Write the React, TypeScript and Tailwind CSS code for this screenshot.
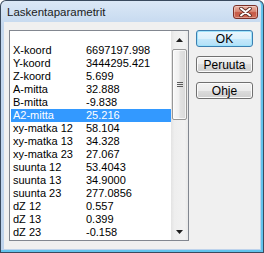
const rows: [string, string][] = [
    ['', ''],
    ['X-koord', '6697197.998'],
    ['Y-koord', '3444295.421'],
    ['Z-koord', '5.699'],
    ['A-mitta', '32.888'],
    ['B-mitta', '-9.838'],
    ['A2-mitta', '25.216'],
    ['xy-matka 12', '58.104'],
    ['xy-matka 13', '34.328'],
    ['xy-matka 23', '27.067'],
    ['suunta 12', '53.4043'],
    ['suunta 13', '34.9000'],
    ['suunta 23', '277.0856'],
    ['dZ 12', '0.557'],
    ['dZ 13', '0.399'],
    ['dZ 23', '-0.158'],
]

const selected = 6

const CloseButton = () => {
    return (
        <div className="w-[25px] h-[14px] rounded-[3px] border border-[#7b2f27] bg-[linear-gradient(to_bottom,#eab3a5_0%,#d98a78_45%,#c75a47_55%,#cf6a55_100%)] shadow-[inset_0_0_0_1px_rgba(255,255,255,0.35)] flex items-center justify-center">
            <svg width="13" height="10" viewBox="0 0 13 10">
                <path d="M2 1.5 L11 8.5 M11 1.5 L2 8.5" stroke="#5a2a24" strokeWidth="3.6" strokeLinecap="round" />
                <path d="M2 1.5 L11 8.5 M11 1.5 L2 8.5" stroke="#ffffff" strokeWidth="2" strokeLinecap="round" />
            </svg>
        </div>
    )
}

const Scrollbar = () => {
    return (
        <div className="w-[17px] h-full flex flex-col bg-[linear-gradient(to_right,#e3e3e3_0%,#eeeeee_20%,#f2f2f2_80%,#e9e9e9_100%)]">
            <div className="h-[17px] flex items-center justify-center">
                <svg width="7" height="4" viewBox="0 0 7 4"><path d="M0 4 L3.5 0 L7 4 Z" fill="#1f1f1f" /></svg>
            </div>
            <div className="mx-px mt-px h-[71px] rounded-[2px] border border-[#979797] bg-[linear-gradient(to_right,#f8f8f8_0%,#f0f0f0_45%,#e2e2e2_55%,#d9d9d9_100%)] shadow-[inset_0_0_0_1px_rgba(255,255,255,0.7)] flex flex-col items-center justify-center gap-px">
                <div className="w-[6px] h-px bg-[#5c5c5c]" />
                <div className="w-[6px] h-px bg-[#5c5c5c]" />
                <div className="w-[6px] h-px bg-[#5c5c5c]" />
            </div>
            <div className="flex-1" />
            <div className="h-[17px] flex items-center justify-center">
                <svg width="7" height="4" viewBox="0 0 7 4"><path d="M0 0 L7 0 L3.5 4 Z" fill="#1f1f1f" /></svg>
            </div>
        </div>
    )
}

const DialogButton = ({label, primary}: {label: string, primary?: boolean}) => {
    return (
        <button className={primary
            ? "w-[57px] h-[17px] rounded-[3px] border border-[#3c7fb1] bg-[linear-gradient(to_bottom,#eaf6fd_0%,#dcf1fc_50%,#c6e9fb_50%,#b3e0f8_100%)] shadow-[inset_0_0_0_1px_#9fe3fb] text-[12px] leading-none text-black"
            : "w-[57px] h-[17px] rounded-[3px] border border-[#707070] bg-[linear-gradient(to_bottom,#f2f2f2_0%,#ebebeb_50%,#dddddd_50%,#cfcfcf_100%)] shadow-[inset_0_0_0_1px_#fbfbfb] text-[12px] leading-none text-black"}>
            {label}
        </button>
    )
}

export default function App() {
    return (
        <div className="w-[264px] h-[253px] bg-[#3a4a5e] p-px rounded-t-[6px] font-['Liberation_Sans',Arial,sans-serif]">
            <div className="h-full flex flex-col rounded-t-[5px] bg-[linear-gradient(to_bottom,#dbe8f6_0%,#c4d8ef_10%,#bed3ec_100%)] pl-[3px] pr-px pb-px border-r-2 border-b-2 border-[#62c3ec]">
                <div className="h-[21px] flex items-center justify-between pl-[3px] pr-[2px]">
                    <span className="text-[11.5px] text-[#1b1b1b] pt-[2px]">Laskentaparametrit</span>
                    <CloseButton />
                </div>
                <div className="flex-1 bg-[#f0f0f0] flex pl-[5px] pt-[8px] pb-[8px] pr-[6px] gap-[7px]">
                    <div className="w-[180px] h-full border border-[#828790] bg-white flex">
                        <div className="flex-1 flex flex-col">
                            {rows.map(([label, value], i) => (
                                <div key={i} className={i === selected
                                    ? "h-[13px] ml-px flex items-center bg-[#3399ff] text-white text-[11px] leading-[13px]"
                                    : "h-[13px] ml-px flex items-center text-black text-[11px] leading-[13px]"}>
                                    <span className="w-[75px] pl-[2px]">{label}</span>
                                    <span>{value}</span>
                                </div>
                            ))}
                        </div>
                        <Scrollbar />
                    </div>
                    <div className="flex flex-col gap-[9px]">
                        <DialogButton label="OK" primary />
                        <DialogButton label="Peruuta" />
                        <DialogButton label="Ohje" />
                    </div>
                </div>
            </div>
        </div>
    )
}
